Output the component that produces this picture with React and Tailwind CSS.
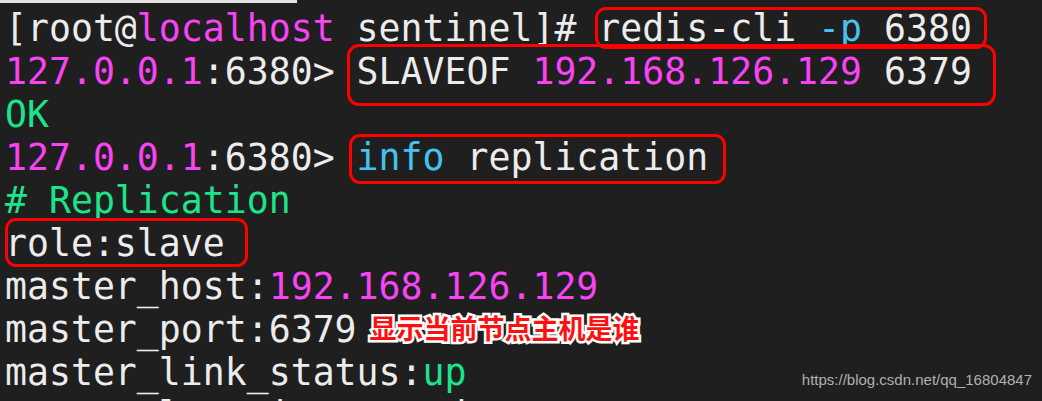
import React from "react";

const P = ({ children }) => <span className="text-[#f943f5]">{children}</span>;
const G = ({ children }) => <span className="text-[#1de38b]">{children}</span>;
const C = ({ children }) => <span className="text-[#45c3ee]">{children}</span>;

function Line({ children }) {
  return <div className="h-[43px] leading-[43px] whitespace-pre">{children}</div>;
}

export default function App() {
  return (
    <div className="relative w-[1042px] h-[401px] overflow-hidden bg-[#1f1f1f]">
      <div className="flex flex-col">
        <div className="h-[3px] w-[297px] bg-[#e4e4e4]" />
        <div
          className="pt-[4px] pl-[5px] text-[36.5px] text-[#ececec] flex flex-col"
          style={{ fontFamily: '"DejaVu Sans Mono", monospace' }}
        >
          <Line>
            [root@<P>localhost</P> sentinel]# redis-cli <C>-p</C> 6380
          </Line>
          <Line>
            <P>127.0.0.1</P>:6380&gt; SLAVEOF <P>192.168.126.129</P> 6379
          </Line>
          <Line>
            <G>OK</G>
          </Line>
          <Line>
            <P>127.0.0.1</P>:6380&gt; <C>info</C> replication
          </Line>
          <Line>
            <G># Replication</G>
          </Line>
          <Line>role:slave</Line>
          <Line>
            master_host:<P>192.168.126.129</P>
          </Line>
          <Line>
            <span>master_port:6379</span>
            <span
              className="inline-block align-top ml-[13px] -mt-[2px] text-[27px] font-bold leading-[43px] text-[#ff1010] [-webkit-text-stroke:5px_#ffffff] [paint-order:stroke_fill]"
              style={{ fontFamily: '"Noto Sans CJK SC", sans-serif' }}
            >
              显示当前节点主机是谁
            </span>
          </Line>
          <Line>
            master_link_status:<G>up</G>
          </Line>
          <Line>master_last_io_seconds_ago:1</Line>
        </div>
      </div>

      {/* red annotation boxes */}
      <div className="absolute left-[595px] top-[7px] w-[392px] h-[42px] border-[3px] border-[#ff0000] rounded-[11px]" />
      <div className="absolute left-[347px] top-[44px] w-[649px] h-[62px] border-[3px] border-[#ff0000] rounded-[12px]" />
      <div className="absolute left-[349px] top-[134px] w-[377px] h-[50px] border-[3px] border-[#ff0000] rounded-[11px]" />
      <div className="absolute left-[5px] top-[218px] w-[243px] h-[49px] border-[3px] border-[#ff0000] rounded-[11px]" />

      <div
        className="absolute right-[10px] top-[371px] text-[15px] leading-[18px] text-[#b0b0b0]"
        style={{ fontFamily: '"Liberation Sans", Arial, sans-serif' }}
      >
        https://blog.csdn.net/qq_16804847
      </div>
    </div>
  );
}
